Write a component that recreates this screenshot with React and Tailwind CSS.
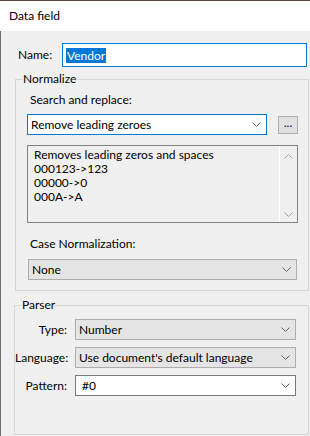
import React from 'react';

const Chevron = ({ up = false }) => (
  <svg width="9" height="5" viewBox="0 0 9 5" className="shrink-0">
    <polyline
      points={up ? '0.5,4.5 4.5,0.5 8.5,4.5' : '0.5,0.5 4.5,4.5 8.5,0.5'}
      fill="none"
      stroke="currentColor"
      strokeWidth="1"
    />
  </svg>
);

const Combo = ({ className = '', textClass = 'pl-[3px]', children }) => (
  <div className={`h-[21px] border flex items-center pr-[5px] ${className}`}>
    <span className={`flex-1 truncate ${textClass}`}>{children}</span>
    <span className="text-[#606060]">
      <Chevron />
    </span>
  </div>
);

const ParserRow = ({ label, children }) => (
  <div className="flex items-center">
    <span className="w-[52px] text-right">{label}</span>
    <div className="ml-[8px] flex-1">{children}</div>
  </div>
);

export default function App() {
  return (
    <div className="w-[310px] h-[436px] overflow-hidden flex flex-col font-['Lato','Liberation_Sans',sans-serif] text-[12px] text-black">
      {/* Title */}
      <div className="h-[31px] shrink-0 bg-white border-t border-[#5b4a43] flex items-center pl-[9px]">
        Data field
      </div>

      <div className="flex-1 flex flex-col bg-[#f0f0f0] border-l border-[#6e6e6e]">
        {/* Name */}
        <div className="flex items-center mt-[12px] pl-[17px]">
          <span className="w-[44px]">Name:</span>
          <div className="w-[245px] h-[24px] bg-white border border-[#0078d7] flex items-center pl-[3px]">
            <span className="bg-[#0078d7] text-white leading-[15px] px-[1px]">Vendor</span>
          </div>
        </div>

        {/* Normalize */}
        <fieldset className="ml-[14px] mr-[1px] mt-[5px] border border-[#d6d6d6]">
          <legend className="ml-[6px] px-[1px] leading-[14px]">Normalize</legend>
          <div className="pl-[11px] pr-[10px] pb-[10px]">
            <div className="pl-[3px] mt-[7px] leading-[14px]">Search and replace:</div>
            <div className="flex items-center mt-[7px]">
              <Combo className="w-[240px] bg-white border-[#0078d7]">Remove leading zeroes</Combo>
              <button className="ml-auto w-[20px] h-[18px] bg-[#e1e1e1] border border-[#adadad] flex items-center justify-center leading-none pb-[3px]">
                ...
              </button>
            </div>

            <div className="mt-[10px] h-[78px] border border-[#828282] flex">
              <div className="flex-1 pl-[6px] pt-[2px] leading-[14px]">
                <div>Removes leading zeros and spaces</div>
                <div>000123-&gt;123</div>
                <div>00000-&gt;0</div>
                <div>000A-&gt;A</div>
              </div>
              <div className="w-[18px] border-l border-white flex flex-col items-center justify-between pt-[8px] pb-[5px] text-[#a6a6a6]">
                <Chevron up />
                <Chevron />
              </div>
            </div>

            <div className="pl-[3px] mt-[14px] leading-[14px]">Case Normalization:</div>
            <div className="mt-[8px] mx-[1px]">
              <Combo className="bg-[#e5e5e5] border-[#adadad]">None</Combo>
            </div>
          </div>
        </fieldset>

        {/* Parser */}
        <fieldset className="flex-1 ml-[13px] mr-[1px] mt-[7px] mb-[1px] border border-[#d6d6d6]">
          <legend className="ml-[6px] px-[1px] leading-[14px]">Parser</legend>
          <div className="pt-[7px] pr-[12px] flex flex-col gap-[7px]">
            <ParserRow label="Type:">
              <Combo className="bg-[#e5e5e5] border-[#adadad]">Number</Combo>
            </ParserRow>
            <ParserRow label="Language:">
              <Combo className="bg-[#e5e5e5] border-[#adadad]">Use document's default language</Combo>
            </ParserRow>
            <ParserRow label="Pattern:">
              <Combo className="bg-white border-[#7a7a7a]" textClass="pl-[6px]">#0</Combo>
            </ParserRow>
          </div>
        </fieldset>
      </div>
    </div>
  );
}
